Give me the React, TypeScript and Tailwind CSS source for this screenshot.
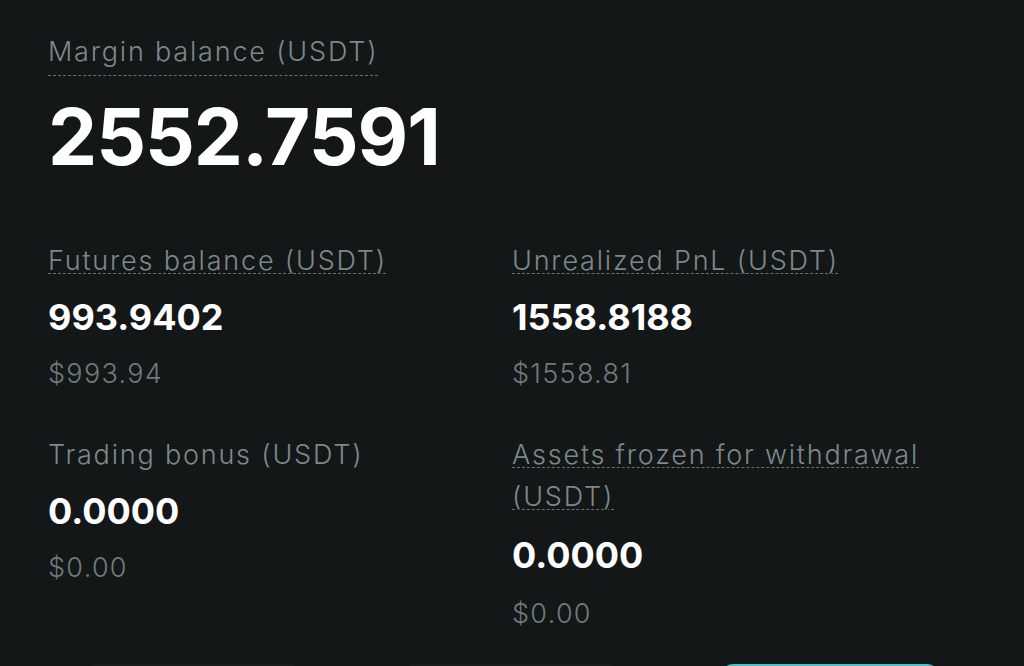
import React from "react";

const labelCls =
  "text-[27px] leading-[42px] font-light tracking-[1.8px] text-[#7c8988] underline decoration-dashed decoration-[#66726f] decoration-1 underline-offset-[3px]";
const labelPlain =
  "text-[27px] leading-[42px] font-light tracking-[1.8px] text-[#7c8988]";
const valueCls = "text-[36px] leading-[38px] font-bold text-white mt-4";
const subCls =
  "text-[27px] leading-[42px] font-light tracking-[1.3px] text-[#6f7b7a] mt-[17px]";

function Item({
  label,
  value,
  sub,
  underline = true,
  wrapped = false,
}: {
  label: string;
  value: string;
  sub: string;
  underline?: boolean;
  wrapped?: boolean;
}) {
  return (
    <div className="flex flex-col items-start pr-4">
      <div className={underline ? labelCls : labelPlain}>{label}</div>
      <div className={wrapped ? valueCls + " pt-[2px]" : valueCls}>{value}</div>
      <div className={wrapped ? subCls + " pt-[2px]" : subCls}>{sub}</div>
    </div>
  );
}

export default function App() {
  return (
    <div
      className="w-[1024px] h-[666px] overflow-hidden bg-[#141718] px-12 pt-[31px]"
      style={{ fontFamily: "Inter, 'Noto Sans', sans-serif" }}
    >
      <div className="inline-block border-b border-dashed border-[#66726f] pb-[2px] text-[27px] leading-[42px] font-light tracking-[1.8px] text-[#7c8988]">
        Margin balance (USDT)
      </div>
      <div className="mt-[22px] text-[78px] leading-[78px] font-bold tracking-[-1px] text-white">
        2552.7591
      </div>
      <div className="mt-[64px] grid grid-cols-2 gap-y-[39px]">
        <Item label="Futures balance (USDT)" value="993.9402" sub="$993.94" />
        <Item label="Unrealized PnL (USDT)" value="1558.8188" sub="$1558.81" />
        <Item
          label="Trading bonus (USDT)"
          value="0.0000"
          sub="$0.00"
          underline={false}
        />
        <Item
          label="Assets frozen for withdrawal (USDT)"
          value="0.0000"
          sub="$0.00"
          wrapped
        />
      </div>
      <div className="mt-[29px] -mx-12 px-[85px] flex justify-between">
        <div className="w-[216px] h-12 rounded-t-xl bg-[#1b1e1f]" />
        <div className="w-[216px] h-12 rounded-t-xl bg-[#1b1e1f]" />
        <div className="w-[218px] h-12 rounded-t-xl bg-[#44c2c8]" />
      </div>
    </div>
  );
}
